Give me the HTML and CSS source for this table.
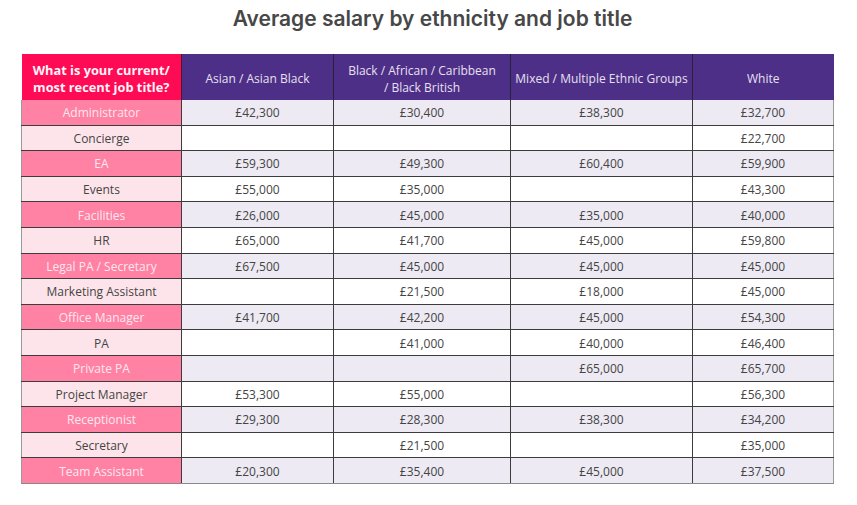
FILE: index.html
```html
<!DOCTYPE html>
<html lang="en">
<head>
<meta charset="utf-8">
<title>Average salary by ethnicity and job title</title>
<link rel="stylesheet" href="styles.css">
</head>
<body>
<div class="page">
  <h1 class="title">Average salary by ethnicity and job title</h1>
  <table class="salary">
    <colgroup>
      <col class="c-title"><col class="c-asian"><col class="c-black"><col class="c-mixed"><col class="c-white">
    </colgroup>
    <thead>
      <tr>
        <th class="q">What is your current/<br>most recent job title?</th>
        <th>Asian / Asian Black</th>
        <th>Black / African / Caribbean<br>/ Black British</th>
        <th>Mixed / Multiple Ethnic Groups</th>
        <th>White</th>
      </tr>
    </thead>
    <tbody>
      <tr class="odd"><td class="job">Administrator</td><td>£42,300</td><td>£30,400</td><td>£38,300</td><td>£32,700</td></tr>
      <tr class="even"><td class="job">Concierge</td><td></td><td></td><td></td><td>£22,700</td></tr>
      <tr class="odd"><td class="job">EA</td><td>£59,300</td><td>£49,300</td><td>£60,400</td><td>£59,900</td></tr>
      <tr class="even"><td class="job">Events</td><td>£55,000</td><td>£35,000</td><td></td><td>£43,300</td></tr>
      <tr class="odd"><td class="job">Facilities</td><td>£26,000</td><td>£45,000</td><td>£35,000</td><td>£40,000</td></tr>
      <tr class="even"><td class="job">HR</td><td>£65,000</td><td>£41,700</td><td>£45,000</td><td>£59,800</td></tr>
      <tr class="odd"><td class="job">Legal PA / Secretary</td><td>£67,500</td><td>£45,000</td><td>£45,000</td><td>£45,000</td></tr>
      <tr class="even"><td class="job">Marketing Assistant</td><td></td><td>£21,500</td><td>£18,000</td><td>£45,000</td></tr>
      <tr class="odd"><td class="job">Office Manager</td><td>£41,700</td><td>£42,200</td><td>£45,000</td><td>£54,300</td></tr>
      <tr class="even"><td class="job">PA</td><td></td><td>£41,000</td><td>£40,000</td><td>£46,400</td></tr>
      <tr class="odd"><td class="job">Private PA</td><td></td><td></td><td>£65,000</td><td>£65,700</td></tr>
      <tr class="even"><td class="job">Project Manager</td><td>£53,300</td><td>£55,000</td><td></td><td>£56,300</td></tr>
      <tr class="odd"><td class="job">Receptionist</td><td>£29,300</td><td>£28,300</td><td>£38,300</td><td>£34,200</td></tr>
      <tr class="even"><td class="job">Secretary</td><td></td><td>£21,500</td><td></td><td>£35,000</td></tr>
      <tr class="odd"><td class="job">Team Assistant</td><td>£20,300</td><td>£35,400</td><td>£45,000</td><td>£37,500</td></tr>
    </tbody>
  </table>
</div>
</body>
</html>
```

FILE: styles.css
```css
html, body {
  margin: 0;
  padding: 0;
  background: #ffffff;
}

.page {
  width: 857px;
  padding-top: 6px;
  font-family: "Open Sans", "Liberation Sans", sans-serif;
  color: #444444;
}

.title {
  margin: 0 0 0 8px;
  height: 48px;
  text-align: center;
  font-family: Inter, "Open Sans", sans-serif;
  font-weight: 600;
  font-size: 21px;
  line-height: 26px;
  letter-spacing: 0;
  color: #474747;
}

.salary {
  margin-left: 21px;
  width: 812px;
  table-layout: fixed;
  border-collapse: collapse;
  font-size: 12px;
}

.c-title { width: 160px; }
.c-asian { width: 152px; }
.c-black { width: 177px; }
.c-mixed { width: 182px; }
.c-white { width: 141px; }

.salary th {
  height: 43px;
  padding: 3px 2px 0;
  background: #4e2f87;
  color: #e6e0f0;
  font-weight: 400;
  font-size: 12px;
  line-height: 17px;
  text-align: center;
  border-left: 1px solid #2a2238;
}

.salary th:first-child { border-left: none; }

.salary th.q {
  background: #ff0a54;
  color: #fff4f8;
  font-weight: 700;
  font-size: 12.8px;
  border-right: 1px solid #4a1a2a;
}

.salary td {
  height: 22.6px;
  padding: 2px 2px 0;
  text-align: center;
  line-height: 16px;
  border: 1px solid #3c3c3c;
  white-space: nowrap;
}

.salary tbody tr td:first-child { border-left-color: #9a9a9a; }
.salary tbody tr td:last-child { border-right-color: #9a9a9a; }
.salary tbody tr:last-child td { border-bottom-color: #8a8a8a; }
.salary tbody tr:first-child td { border-top: none; }

.odd td { background: #edeaf3; }
.even td { background: #ffffff; }

.odd td.job {
  background: #ff81a4;
  color: #fde8ef;
}

.even td.job {
  background: #fde4ea;
  color: #444444;
}
```
